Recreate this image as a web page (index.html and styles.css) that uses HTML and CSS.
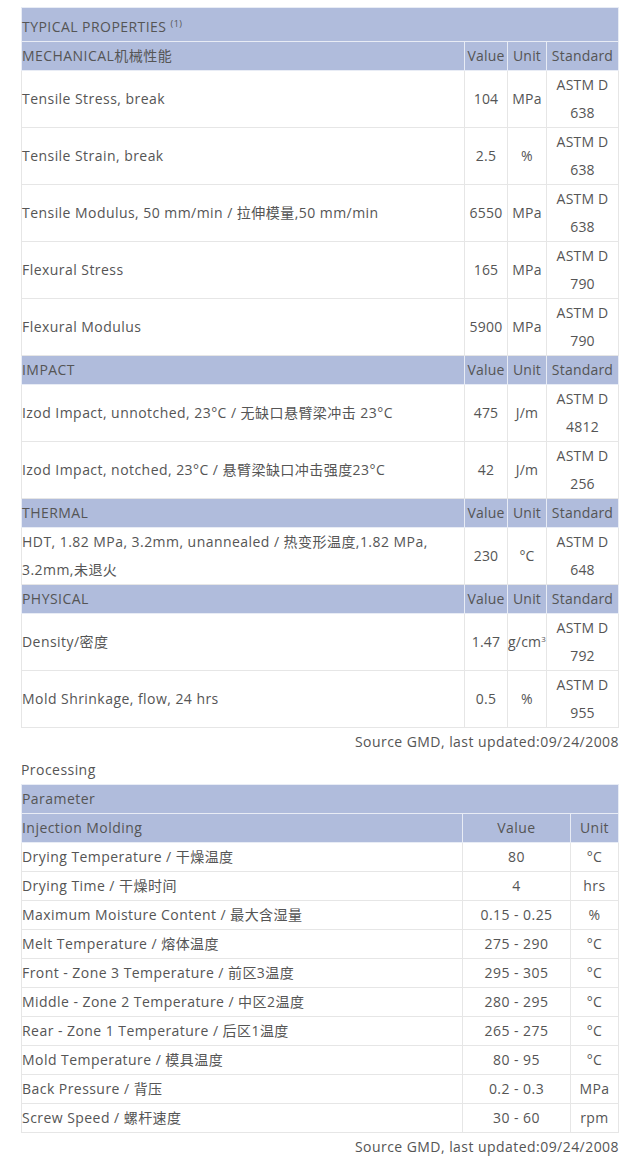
FILE: index.html
```html
<!DOCTYPE html>
<html lang="zh">
<head>
  <meta charset="UTF-8" />
  <title>Typical Properties</title>
  <link rel="stylesheet" href="styles.css">
</head>
<body>
  <div class="wrap">
    <table class="props">
      <colgroup>
        <col>
        <col class="c-value">
        <col class="c-unit">
        <col class="c-std">
      </colgroup>
      <tr class="title"><td colspan="4">TYPICAL PROPERTIES <sup>(1)</sup></td></tr>

      <tr class="head"><td>MECHANICAL机械性能</td><td>Value</td><td>Unit</td><td>Standard</td></tr>
      <tr><td>Tensile Stress, break</td><td>104</td><td>MPa</td><td>ASTM D<br>638</td></tr>
      <tr><td>Tensile Strain, break</td><td>2.5</td><td>%</td><td>ASTM D<br>638</td></tr>
      <tr><td>Tensile Modulus, 50 mm/min / 拉伸模量,50 mm/min</td><td>6550</td><td>MPa</td><td>ASTM D<br>638</td></tr>
      <tr><td>Flexural Stress</td><td>165</td><td>MPa</td><td>ASTM D<br>790</td></tr>
      <tr><td>Flexural Modulus</td><td>5900</td><td>MPa</td><td>ASTM D<br>790</td></tr>

      <tr class="head"><td>IMPACT</td><td>Value</td><td>Unit</td><td>Standard</td></tr>
      <tr><td>Izod Impact, unnotched, 23°C / 无缺口悬臂梁冲击 23°C</td><td>475</td><td>J/m</td><td>ASTM D<br>4812</td></tr>
      <tr><td>Izod Impact, notched, 23°C / 悬臂梁缺口冲击强度23°C</td><td>42</td><td>J/m</td><td>ASTM D<br>256</td></tr>

      <tr class="head"><td>THERMAL</td><td>Value</td><td>Unit</td><td>Standard</td></tr>
      <tr><td>HDT, 1.82 MPa, 3.2mm, unannealed / 热变形温度,1.82 MPa, 3.2mm,未退火</td><td>230</td><td>°C</td><td>ASTM D<br>648</td></tr>

      <tr class="head"><td>PHYSICAL</td><td>Value</td><td>Unit</td><td>Standard</td></tr>
      <tr><td>Density/密度</td><td>1.47</td><td>g/cm<span class="sup3">3</span></td><td>ASTM D<br>792</td></tr>
      <tr><td>Mold Shrinkage, flow, 24 hrs</td><td>0.5</td><td>%</td><td>ASTM D<br>955</td></tr>
    </table>
    <p class="source">Source GMD, last updated:09/24/2008</p>

    <p class="section">Processing</p>

    <table class="proc">
      <colgroup>
        <col>
        <col class="c-pvalue">
        <col class="c-punit">
      </colgroup>
      <tr class="head"><td colspan="3">Parameter</td></tr>
      <tr class="head"><td>Injection Molding</td><td>Value</td><td>Unit</td></tr>
      <tr><td>Drying Temperature / 干燥温度</td><td>80</td><td>°C</td></tr>
      <tr><td>Drying Time / 干燥时间</td><td>4</td><td>hrs</td></tr>
      <tr><td>Maximum Moisture Content / 最大含湿量</td><td>0.15 - 0.25</td><td>%</td></tr>
      <tr><td>Melt Temperature / 熔体温度</td><td>275 - 290</td><td>°C</td></tr>
      <tr><td>Front - Zone 3 Temperature / 前区3温度</td><td>295 - 305</td><td>°C</td></tr>
      <tr><td>Middle - Zone 2 Temperature / 中区2温度</td><td>280 - 295</td><td>°C</td></tr>
      <tr><td>Rear - Zone 1 Temperature / 后区1温度</td><td>265 - 275</td><td>°C</td></tr>
      <tr><td>Mold Temperature / 模具温度</td><td>80 - 95</td><td>°C</td></tr>
      <tr><td>Back Pressure / 背压</td><td>0.2 - 0.3</td><td>MPa</td></tr>
      <tr><td>Screw Speed / 螺杆速度</td><td>30 - 60</td><td>rpm</td></tr>
    </table>
    <p class="source">Source GMD, last updated:09/24/2008</p>
  </div>
</body>
</html>
```

FILE: styles.css
```css
body {
  margin: 0;
  font-family: "Open Sans", "Noto Sans CJK SC", sans-serif;
  font-size: 14px;
  letter-spacing: 0.45px;
  color: #555;
  background: #fff;
}
.wrap {
  padding: 7px 9px 20px 21px;
}
table {
  width: 100%;
  border-collapse: collapse;
  border: 1px solid #333;
}
td {
  border: 1px solid #e6e6e6;
  padding: 0;
  line-height: 28px;
  vertical-align: middle;
  text-align: center;
}
td:first-child {
  text-align: left;
}
.props td:not(:first-child) {
  letter-spacing: 0.2px;
}
tr.head td,
tr.title td {
  background: #b0bcdc;
  border-color: #e8ecf5;
}
tr.title td {
  padding-top: 5px;
}
tr.title sup {
  font-size: 9px;
  vertical-align: 5px;
  line-height: 0;
}
.sup3 {
  font-size: 8px;
  vertical-align: 5px;
  line-height: 0;
}
.c-value { width: 43px; }
.c-unit { width: 38px; }
.c-std { width: 72px; }
.c-pvalue { width: 108px; }
.c-punit { width: 48px; }
.source {
  margin: 4px 0 0;
  line-height: 20px;
  text-align: right;
}
.section {
  margin: 8px 0 4px;
  line-height: 20px;
}
```
